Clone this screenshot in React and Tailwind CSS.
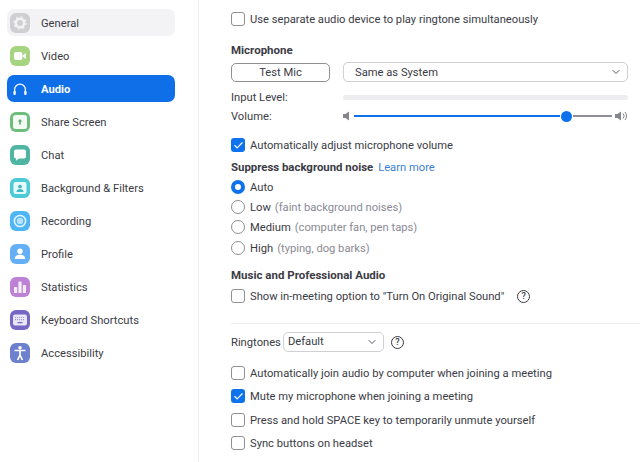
import React from 'react';
import { ChevronDown, Check } from 'lucide-react';

// ─── sidebar icons ──────────────────────────────────────────────────────────

const Tile = ({ color, children }) => (
  <svg width="20" height="20" viewBox="0 0 20 20" className="shrink-0">
    <rect width="20" height="20" rx="6" fill={color} />
    {children}
  </svg>
);

const GeneralIcon = () => (
  <Tile color="#cfcfd2">
    <circle cx="10" cy="10" r="4.2" fill="none" stroke="#f2f2f4" strokeWidth="2.6" />
    <circle cx="10" cy="10" r="6" fill="none" stroke="#f2f2f4" strokeWidth="1.4" strokeDasharray="2 2.7" />
  </Tile>
);

const VideoIcon = () => (
  <Tile color="#a7d480">
    <rect x="4" y="6" width="8.5" height="8" rx="2" fill="#fff" />
    <path d="M13 9.2 16 7v6l-3-2.2z" fill="#fff" />
  </Tile>
);

const ShareIcon = () => (
  <Tile color="#6fbd7c">
    <rect x="3" y="3" width="14" height="14" rx="2.5" fill="#f4faf4" />
    <path d="M10 7 12.2 9.6H10.8V12.6H9.2V9.6H7.8z" fill="#57ad68" />
  </Tile>
);

const ChatIcon = () => (
  <Tile color="#4fb5a3">
    <path d="M6 4.5h8a2 2 0 0 1 2 2v5a2 2 0 0 1-2 2H9l-3 2.2V13.5a2 2 0 0 1-2-2v-5a2 2 0 0 1 2-2z" fill="#fff" />
  </Tile>
);

const BackgroundIcon = () => (
  <Tile color="#4ccbd5">
    <rect x="3.5" y="4" width="13" height="12" rx="2" fill="#e6f8fa" />
    <circle cx="10" cy="8.6" r="1.9" fill="#3fb8c4" />
    <path d="M6.5 14c0-2.2 1.6-3 3.5-3s3.5.8 3.5 3z" fill="#3fb8c4" />
  </Tile>
);

const RecordingIcon = () => (
  <Tile color="#4fb6f6">
    <circle cx="10" cy="10" r="5.6" fill="none" stroke="#eaf6fe" strokeWidth="1.5" />
    <circle cx="10" cy="10" r="3.2" fill="#b9e1fb" />
  </Tile>
);

const ProfileIcon = () => (
  <Tile color="#65aff6">
    <circle cx="10" cy="7.3" r="2.7" fill="#fff" />
    <path d="M4.8 15c0-3 2.3-4.2 5.2-4.2s5.2 1.2 5.2 4.2z" fill="#fff" />
  </Tile>
);

const StatisticsIcon = () => (
  <Tile color="#bd82d6">
    <rect x="4" y="10" width="3.2" height="6" rx="0.6" fill="#f6ecfa" />
    <rect x="8.4" y="4.5" width="3.2" height="11.5" rx="0.6" fill="#f6ecfa" />
    <rect x="12.8" y="8" width="3.2" height="8" rx="0.6" fill="#f6ecfa" />
  </Tile>
);

const KeyboardIcon = () => (
  <Tile color="#7767c5">
    <rect x="3" y="4.5" width="14" height="11" rx="2" fill="#e9e6f7" />
    <path d="M5 7.5h10M5 9.7h10" stroke="#9f94d8" strokeWidth="1.2" strokeDasharray="1 1" />
    <path d="M7.5 12.6h5" stroke="#7767c5" strokeWidth="1.3" />
  </Tile>
);

const AccessibilityIcon = () => (
  <Tile color="#6c80cd">
    <circle cx="10" cy="4.8" r="1.7" fill="#fff" />
    <path d="M4.5 7.5h11M10 7.5v5M10 12l-2.4 5M10 12l2.4 5" stroke="#fff" strokeWidth="1.7" fill="none" />
  </Tile>
);

const AudioIcon = () => (
  <svg width="20" height="20" viewBox="0 0 20 20" className="shrink-0">
    <path d="M4.6 13V10.5a5.4 5.4 0 0 1 10.8 0V13" fill="none" stroke="#fff" strokeWidth="1.3" />
    <rect x="3.4" y="12" width="2.4" height="4" rx="1.1" fill="#fff" />
    <rect x="14.2" y="12" width="2.4" height="4" rx="1.1" fill="#fff" />
  </svg>
);

const navItems = [
  { label: 'General', Icon: GeneralIcon, hover: true },
  { label: 'Video', Icon: VideoIcon },
  { label: 'Audio', Icon: AudioIcon, active: true },
  { label: 'Share Screen', Icon: ShareIcon },
  { label: 'Chat', Icon: ChatIcon },
  { label: 'Background & Filters', Icon: BackgroundIcon },
  { label: 'Recording', Icon: RecordingIcon },
  { label: 'Profile', Icon: ProfileIcon },
  { label: 'Statistics', Icon: StatisticsIcon },
  { label: 'Keyboard Shortcuts', Icon: KeyboardIcon },
  { label: 'Accessibility', Icon: AccessibilityIcon },
];

// ─── form bits ──────────────────────────────────────────────────────────────

const CheckRow = ({ checked, className = '', children }) => (
  <div className={`flex h-5 items-center gap-[5px] ${className}`}>
    {checked ? (
      <span className="flex size-[14px] shrink-0 items-center justify-center rounded-[3px] bg-[#0e72ed]">
        <Check size={11} strokeWidth={2.5} className="text-white" />
      </span>
    ) : (
      <span className="size-[14px] shrink-0 rounded-[3px] border border-[#8f8f94] bg-white" />
    )}
    <span className="pt-[2px]">{children}</span>
  </div>
);

const RadioRow = ({ checked, label, hint, className = '' }) => (
  <div className={`flex h-5 items-center gap-[5px] ${className}`}>
    {checked ? (
      <span className="size-[14px] shrink-0 rounded-full border-[4px] border-[#0e72ed] bg-white" />
    ) : (
      <span className="size-[14px] shrink-0 rounded-full border border-[#8f8f94] bg-white" />
    )}
    <span className="pt-[2px]">{label}</span>
    {hint && <span className="-ml-px pt-[2px] text-[#8a8a94]">{hint}</span>}
  </div>
);

const HelpIcon = () => (
  <span className="flex size-[13px] shrink-0 items-center justify-center rounded-full border-[1.5px] border-[#3a3a44] text-[9px] leading-none font-medium">
    ?
  </span>
);

const SpeakerIcon = ({ loud }) => (
  <svg width="13" height="10" viewBox="0 0 13 10" className="shrink-0">
    <path d="M0 3h2.5L6 .5v9L2.5 7H0z" fill="#85858c" />
    {loud && <path d="M8 2.5a3.5 3.5 0 0 1 0 5M10 1a6 6 0 0 1 0 8" fill="none" stroke="#85858c" strokeWidth="1" />}
  </svg>
);

// ─── page ───────────────────────────────────────────────────────────────────

export default function App() {
  return (
    <div
      className="flex h-[462px] w-[640px] overflow-hidden bg-white text-[11.2px] text-[#3b3b45]"
      style={{ fontFamily: 'Roboto, sans-serif' }}
    >
      <aside className="flex w-[199px] shrink-0 flex-col gap-[6px] border-r border-[#ededf0] pt-[9px] pl-[7px]">
        {navItems.map(({ label, Icon, active, hover }) => (
          <div
            key={label}
            className={`flex h-[27px] w-[168px] items-center gap-[11px] rounded-[7px] pl-[3px] ${
              active ? 'bg-[#0e6fe8] font-bold text-white' : hover ? 'bg-[#f3f3f6]' : ''
            }`}
          >
            <span className="flex pt-px">
              <Icon />
            </span>
            <span className="pt-[4px]">{label}</span>
          </div>
        ))}
      </aside>

      <main className="flex-1 pt-[9px] pl-[32px]">
        <CheckRow>Use separate audio device to play ringtone simultaneously</CheckRow>

        <h3 className="mt-[11px] h-5 text-[11.5px] leading-[21px] font-bold">Microphone</h3>
        <div className="mt-[2px] flex h-5 items-center">
          <button className="h-[19px] w-[99px] rounded-[5px] border border-[#8f8f94] pt-px leading-none">Test Mic</button>
          <div className="ml-[13px] flex h-5 w-[285px] items-center justify-between rounded-[5px] border border-[#cfcfd4] pr-[5px] pl-[11px]">
            <span className="pt-[2px]">Same as System</span>
            <ChevronDown size={12} className="text-[#55555e]" />
          </div>
        </div>

        <div className="mt-[7px] flex h-4 items-center">
          <span className="w-[112px] pt-[2px]">Input Level:</span>
          <div className="h-[5px] w-[285px] rounded-full bg-[#ededf0]" />
        </div>
        <div className="mt-[3px] flex h-4 items-center">
          <span className="w-[112px] pt-[2px]">Volume:</span>
          <div className="flex w-[285px] items-center">
            <SpeakerIcon />
            <div className="-ml-[2px] h-[2px] w-[206px] bg-[#0e72ed]" />
            <span className="mx-[1px] size-[11px] shrink-0 rounded-full bg-[#0e72ed]" />
            <div className="h-[2px] w-[39px] bg-[#8e8e96]" />
            <span className="ml-auto flex">
              <SpeakerIcon loud />
            </span>
          </div>
        </div>

        <CheckRow checked className="mt-[11px]">Automatically adjust microphone volume</CheckRow>

        <div className="mt-[2px] flex h-5 items-center gap-[5px] pt-[2px]">
          <span className="text-[11.4px] font-bold">Suppress background noise</span>
          <span className="text-[#3c7fd9]">Learn more</span>
        </div>
        <RadioRow checked label="Auto" />
        <RadioRow label="Low" hint="(faint background noises)" />
        <RadioRow label="Medium" hint="(computer fan, pen taps)" />
        <RadioRow label="High" hint="(typing, dog barks)" className="mt-[1px]" />

        <h3 className="mt-[7px] h-5 text-[11.5px] leading-[21px] font-bold">Music and Professional Audio</h3>
        <div className="mt-[1px] flex h-5 items-center gap-[13px]">
          <CheckRow>Show in-meeting option to "Turn On Original Sound"</CheckRow>
          <HelpIcon />
        </div>

        <hr className="mt-[17px] border-[#ededf0]" />

        <div className="mt-[8px] flex h-5 items-center">
          <span className="pt-[2px]">Ringtones</span>
          <div className="ml-[2px] flex h-5 w-[101px] items-center justify-between rounded-[5px] border border-[#cfcfd4] pr-[5px] pl-[4px]">
            <span>Default</span>
            <ChevronDown size={12} className="text-[#55555e]" />
          </div>
          <span className="ml-[7px] flex">
            <HelpIcon />
          </span>
        </div>

        <CheckRow className="mt-[11px]">Automatically join audio by computer when joining a meeting</CheckRow>
        <CheckRow checked className="mt-[3px]">Mute my microphone when joining a meeting</CheckRow>
        <CheckRow className="mt-[4px]">Press and hold SPACE key to temporarily unmute yourself</CheckRow>
        <CheckRow className="mt-[3px]">Sync buttons on headset</CheckRow>
      </main>
    </div>
  );
}
